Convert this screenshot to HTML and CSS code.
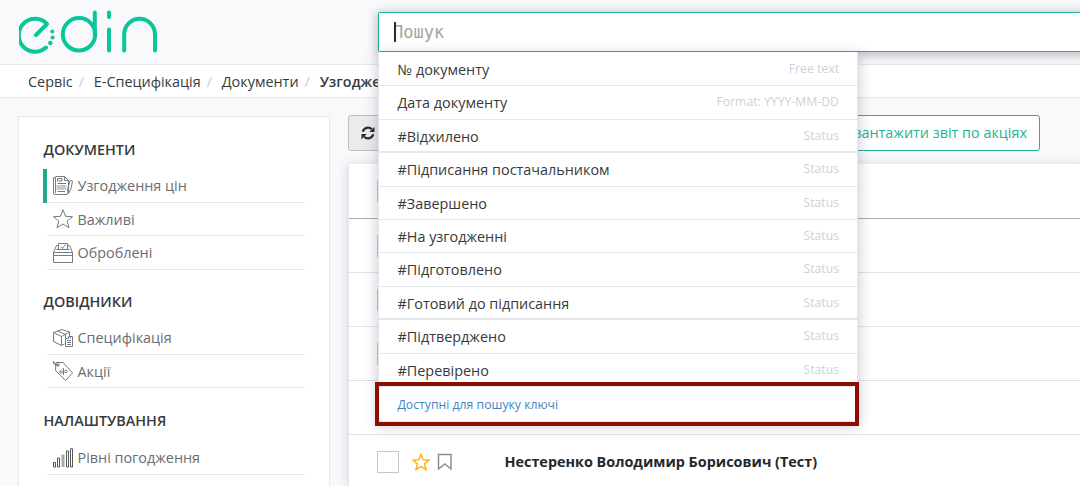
FILE: index.html
```html
<!DOCTYPE html>
<html lang="uk">
<head>
<meta charset="utf-8">
<title>edin</title>
<link rel="stylesheet" href="styles.css">
</head>
<body>
<header class="header">
  <svg class="logo" width="140" height="46" viewBox="0 0 140 46" fill="none" stroke="#07c79b" stroke-width="4" stroke-linecap="round" stroke-linejoin="round">
    <path d="M17 25 28 14A16.400 16.400 0 1 0 27 37.500"/>
    <circle cx="60" cy="24.300" r="16.200"/>
    <path d="M75.800 2.500V25M90 2.500V7M90 19.500V40.500M105.200 40.500V24.500a15.400 15.800 0 0 1 30.800 0V40.500"/>
    <g fill="#07c79b" stroke="none"><circle cx="33.300" cy="21.500" r="2"/><circle cx="33.600" cy="27.500" r="2.100"/><circle cx="31.300" cy="33" r="2.200"/></g>
  </svg>
  <div class="search">
    <input class="search-input" type="text" placeholder="Пошук">
    <span class="caret"></span>
    <div class="menu">
      <div class="option"><span>№ документу</span><small>Free text</small></div>
      <div class="option"><span>Дата документу</span><small>Format: YYYY-MM-DD</small></div>
      <div class="option thick"><span>#Відхилено</span><small>Status</small></div>
      <div class="option"><span>#Підписання постачальником</span><small>Status</small></div>
      <div class="option"><span>#Завершено</span><small>Status</small></div>
      <div class="option"><span>#На узгодженні</span><small>Status</small></div>
      <div class="option"><span>#Підготовлено</span><small>Status</small></div>
      <div class="option thick"><span>#Готовий до підписання</span><small>Status</small></div>
      <div class="option"><span>#Підтверджено</span><small>Status</small></div>
      <div class="option"><span>#Перевірено</span><small>Status</small></div>
      <div class="keys"><a>Доступні для пошуку ключі</a></div>
    </div>
  </div>
</header>
<nav class="crumbs"><span>Сервіс</span><i>/</i><span>Е-Специфікація</span><i>/</i><span>Документи</span><i>/</i><b>Узгодження</b></nav>
<div class="page">
  <aside class="sidebar">
    <h2>ДОКУМЕНТИ</h2>
    <ul>
      <li class="active"><svg class="ico" viewBox="0 0 20 20"><path d="M2.500 .5H11.500L15.500 4.500V16L14 18.500H2Q.5 18.500.5 17V1.500H2.500V17"/><path d="M11.500 .5V4.500H15.500M4.500 2.500H9V5H4.500ZM4.500 7.500H13M4.500 15.500H12M17 4.500 19.500 5 18 13 15.500 17.500 14.500 14Z"/><path class="solid" d="M3.500 9h10v5h-10z"/></svg><span>Узгодження цін</span></li>
      <li><svg class="ico" viewBox="0 0 20 20"><path d="M10 .8 12.500 7.300 19.500 7.700 14.200 12.100 16 18.700 10 15 4 18.700 5.800 12.100.5 7.700 7.500 7.300Z"/></svg><span>Важливі</span></li>
      <li><svg class="ico" viewBox="0 0 20 20"><path d="M.5 9.500 3.500 2.500H5.500M14.500 2.500H16.500L19.500 9.500V19.500H.5V9.500M.5 12.500H19.500M.5 9.500H19.500M5.500 6.500V.5H14.500V6.500M3.500 6.500H16.500M8 3.500 9.500 5.500 12.500 1.500"/></svg><span>Оброблені</span></li>
    </ul>
    <h2>ДОВІДНИКИ</h2>
    <ul>
      <li><svg class="ico" viewBox="0 0 20 20"><path d="M.5 4.500 9 1.500 16.500 4 8.500 8.500ZM.5 4.500V13.500L8.500 17.500V8.500M16.500 4V8M4.500 3 12.500 6.500V10M8.500 17.500 11.500 16M12.500 10.500V18.500H19.500V8.500H15.500V10.500ZM14 12.500H18M14 14.500H18M14 16.500H18M17.500 8.500V10.500"/></svg><span>Специфікація</span></li>
      <li><svg class="ico" viewBox="0 0 20 20"><path d="M3 1.500H10L19.500 12 12.500 19.500 2.500 9.500ZM0 .5 5.500 5M.5 .5V2.500L3 4.500M10.500 7V14"/><circle cx="5" cy="4" r="1.200"/><circle cx="8" cy="11" r="1.200"/><circle cx="13" cy="10.500" r="1.200"/></svg><span>Акції</span></li>
    </ul>
    <h2 class="settings">НАЛАШТУВАННЯ</h2>
    <ul>
      <li><svg class="ico dark" viewBox="0 0 20 20"><path class="solid" d="M8.500 6.500h3v12.500h-3z"/><path d="M.5 14.500h2v4.500h-2zM4.500 10h2v9h-2zM13.500 3h2v16h-2zM17.500.7h2v18.300h-2z"/></svg><span>Рівні погодження</span></li>
    </ul>
  </aside>
  <main class="main">
    <div class="toolbar">
      <button class="refresh"><svg width="14" height="14" viewBox="0 0 14 14"><path fill="none" stroke="#292b2c" stroke-width="2.200" d="M1.800 5.700A5.300 5.300 0 0 1 10.800 3.300M12.200 8.300A5.300 5.300 0 0 1 3.200 10.700"/><path fill="#292b2c" d="M13.500.8V6H8.300ZM.5 13.200V8H5.700Z"/></svg></button>
      <button class="export">Завантажити звіт по акціях</button>
    </div>
    <section class="table">
      <div class="row head"><span class="box"></span></div>
      <div class="row"><span class="box"></span></div>
      <div class="row"><span class="box"></span></div>
      <div class="row"><span class="box"></span></div>
      <div class="row"></div>
      <div class="row last"><span class="box"></span>
        <svg class="star" width="18" height="18" viewBox="0 0 18 18"><path d="M9 1.300 11.200 6.700 17 7.100 12.600 10.900 14 16.500 9 13.500 4 16.500 5.400 10.900 1 7.100 6.800 6.700Z" fill="none" stroke="#fdb515" stroke-width="1.500"/></svg>
        <svg class="mark" width="16" height="18" viewBox="0 0 16 18"><path d="M1.500 1.500H14V16L7.800 11 1.500 16Z" fill="none" stroke="#888b90" stroke-width="1.400"/></svg>
        <strong>Нестеренко Володимир Борисович (Тест)</strong>
      </div>
    </section>
  </main>
</div>
<div class="highlight"></div>
</body>
</html>
```
FILE: styles.css
```css
* { box-sizing: border-box; }
body {
  margin: 0;
  height: 486px;
  overflow: hidden;
  background: #f9f9fb;
  color: #373a3c;
  font: 14.400px/20px "Open Sans", "Noto Sans", sans-serif;
}
.header {
  position: relative;
  height: 65px;
  padding: 9.500px 0 0 19px;
  border-bottom: 1px solid #e4e7ea;
}
.logo { display: block; }
.search {
  position: absolute;
  z-index: 2;
  left: 378px;
  top: 12px;
  width: 722px;
}
.search-input {
  display: block;
  position: relative;
  width: 100%;
  height: 40px;
  padding: 0 14px;
  border: 1px solid #1fb294;
  border-radius: 2px;
  background: #fff;
  box-shadow: 0 2px 10px 2px rgba(60, 65, 95, .3);
  font: 17px "DejaVu Sans Mono", monospace;
  outline: 0;
}
.search-input::placeholder { color: #a4a4a4; opacity: 1; }
.caret {
  position: absolute;
  left: 16px;
  top: 10px;
  width: 2px;
  height: 20px;
  background: #292b2c;
}
.menu {
  position: relative;
  width: 480px;
  height: 370px;
  padding-top: 1px;
  border: 1px solid #e4e7ea;
  border-top: 0;
  background: #fff;
  box-shadow: 0 3px 12px 1px rgba(70, 70, 110, .28);
}
.option {
  display: flex;
  justify-content: space-between;
  height: 33.400px;
  padding: 7px 18px 0 18.500px;
  border-bottom: 1px solid #e4e7ea;
}
.option.thick { border-bottom-width: 2px; }
.option small { font-size: 12.240px; line-height: 17px; color: #ced1da; }
.keys { padding: 9px 18.500px; font-size: 12.240px; line-height: 18px; color: #3e87c3; }
.highlight {
  position: absolute;
  z-index: 3;
  left: 375px;
  top: 382px;
  width: 484px;
  height: 44px;
  border: 4px solid #8e0c00;
}
.crumbs {
  display: flex;
  height: 33px;
  padding: 7px 0 0 28px;
  border-bottom: 1px solid #e7e7ef;
  background: #fff;
  white-space: nowrap;
}
.crumbs i { margin: 0 9.800px 0 6px; color: #ccc; font-style: normal; }
.crumbs b { font-weight: 600; }
.page { display: flex; gap: 18px; height: 388px; padding: 17px 0 0 18px; overflow: hidden; }
.sidebar {
  flex: none;
  width: 312px;
  height: 370px;
  margin-top: 1px;
  padding: 23px 24px 0 24.500px;
  border: 1px solid #e7e7f0;
  border-bottom: 0;
  background: #fff;
}
h2 { margin: 0 0 10px; font-size: 14.400px; line-height: 19px; font-weight: 600; }
h2.settings { margin-bottom: 11px; }
ul { margin: 0 0 22.500px -.500px; padding: 0; list-style: none; }
li {
  display: flex;
  align-items: center;
  gap: 5px;
  height: 33.600px;
  margin-left: 4px;
  padding: 1.500px 0 0 5.500px;
  border-bottom: 1px solid #e4e7ea;
  color: #6b6c6f;
}
li.active { box-shadow: -4px 0 #1faa8c; }
.ico { width: 20px; height: 20px; margin-top: -1px; fill: none; stroke: #6b6c6f; stroke-width: .9; }
.ico.dark { stroke: #444; }
.ico .solid { fill: #c8c9cb; stroke: none; }
.ico.dark .solid { fill: #aaa; }
.main { flex: 1; }
.toolbar { display: flex; justify-content: space-between; width: 692px; height: 36px; }
button {
  height: 36px;
  padding: 0 12px;
  border: 1px solid #1fb294;
  border-radius: 3px;
  background: #fff;
  color: #1fb294;
  font: inherit;
}
.refresh { border-color: #bdbdbf; background: #ebebec; width: 40px; }
.refresh svg { display: block; }
.table {
  margin-top: 12px;
  height: 323px;
  border-left: 1px solid #e7e7ef;
  border-top: 1px solid #ececf1;
  background: #fff;
  box-shadow: 0 2px 10px rgba(70, 70, 110, .22);
}
.row {
  display: flex;
  align-items: center;
  height: 54px;
  padding-left: 28px;
  border-bottom: 1px solid #e1e2e5;
}
.row.head { height: 55px; border-color: #acacac; }
.row.last { height: 51px; padding-top: 3px; border: 0; }
.box { width: 22px; height: 22px; border: 1px solid #c9c7c0; background: #fff; }
.star { margin-left: 13px; }
.mark { margin-left: 7px; }
.row strong { margin-left: 51.500px; color: #25272a; }
```
